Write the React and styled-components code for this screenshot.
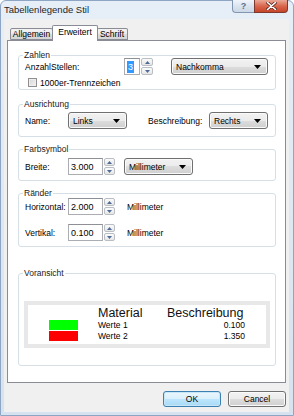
import styled, { createGlobalStyle } from "styled-components";

const Global = createGlobalStyle`
  * { box-sizing: border-box; }
  html, body { margin: 0; padding: 0; background: #fff; }
  body {
    font-family: "Liberation Sans", Arial, sans-serif;
    font-size: 8.5px;
    color: #000;
  }
`;

const Window = styled.div`
  width: 294px;
  height: 416px;
  display: flex;
  flex-direction: column;
  background: linear-gradient(#e6eef7, #d6e2ef);
  border: 1px solid #8ea6c3;
  border-radius: 6px 6px 0 0;
  padding: 0 4px 3px 3px;
`;

const TitleBar = styled.div`
  height: 18px;
  display: flex;
  align-items: flex-start;
`;

const Title = styled.div`
  padding-top: 3px;
  font-size: 9.5px;
  line-height: 11px;
  color: #1e1e1e;
`;

const CaptionButtons = styled.div`
  margin-left: auto;
  margin-right: 1px;
  margin-top: -1px;
  display: flex;
`;

const HelpButton = styled.div`
  width: 22px;
  height: 13px;
  border: 1px solid #8396b0;
  border-top: none;
  border-right: none;
  border-radius: 0 0 0 4px;
  background: linear-gradient(#f1f5fa, #dbe4ef 50%, #ccd8e6);
  color: #5b6e8b;
  font-size: 9px;
  font-weight: bold;
  display: flex;
  align-items: center;
  justify-content: center;
`;

const CloseButton = styled.div`
  width: 34px;
  height: 13px;
  border: 1px solid #7b3a2d;
  border-top: none;
  border-radius: 0 0 4px 0;
  background: linear-gradient(#eaa996, #d9674e 50%, #c6452a);
  display: flex;
  align-items: center;
  justify-content: center;
`;

const Client = styled.div`
  flex: 1;
  display: flex;
  flex-direction: column;
  background: #f0f0f0;
  padding: 6px 3px 5px 3px;
`;

const TabRow = styled.div`
  height: 15px;
  display: flex;
  align-items: flex-end;
  padding-left: 3px;
  position: relative;
  z-index: 1;
`;

const Tab = styled.div`
  width: ${(p) => p.$w}px;
  height: ${(p) => (p.$active ? 16 : 12)}px;
  margin-bottom: ${(p) => (p.$active ? -1 : 0)}px;
  margin-left: ${(p) => (p.$active ? -1 : 0)}px;
  margin-right: ${(p) => (p.$active ? -1 : 0)}px;
  border: 1px solid #898c95;
  border-bottom: ${(p) => (p.$active ? "none" : "1px solid #898c95")};
  border-left: ${(p) => (p.$first || p.$active ? "1px solid #898c95" : "none")};
  border-radius: 2px 2px 0 0;
  background: ${(p) =>
    p.$active ? "#fff" : "linear-gradient(#f3f3f3, #ebebeb 50%, #dddddd 50%, #d5d5d5)"};
  display: flex;
  align-items: center;
  justify-content: center;
  font-size: 8.5px;
  padding-bottom: ${(p) => (p.$active ? 3 : 0)}px;
  z-index: ${(p) => (p.$active ? 2 : 1)};
`;

const Panel = styled.div`
  flex: 1;
  background: #fff;
  border: 1px solid #898c95;
  padding: 14px 9px 0 10px;
  display: flex;
  flex-direction: column;
`;

const Group = styled.div`
  border: 1px solid #d5dfe5;
  border-radius: 3px;
  margin-top: ${(p) => p.$mt}px;
  padding: 0 6px ${(p) => p.$pb}px 6px;
  display: flex;
  flex-direction: column;
`;

const Caption = styled.div`
  align-self: flex-start;
  margin: -6px 0 -3px -2px;
  padding: 0 1px;
  background: #fff;
  line-height: 11px;
  font-size: 8.5px;
  color: #1a1a1a;
`;

const Row = styled.div`
  display: flex;
  align-items: center;
  height: ${(p) => p.$h}px;
  margin-top: ${(p) => p.$mt}px;
`;

const Label = styled.div`
  width: ${(p) => p.$w}px;
  margin-left: ${(p) => p.$ml || 0}px;
  flex-shrink: 0;
  font-size: 8.5px;
  white-space: nowrap;
`;

const TextBox = styled.div`
  width: ${(p) => p.$w}px;
  height: 17px;
  border: 1px solid #abadb3;
  border-top-color: #8e9096;
  background: #fff;
  padding-left: 2px;
  display: flex;
  align-items: center;
  font-size: 9px;
`;

const Selected = styled.span`
  background: #3399ff;
  color: #fff;
  padding: 0 1px;
  line-height: 12px;
`;

const SpinStack = styled.div`
  width: ${(p) => p.$w}px;
  height: 17px;
  margin-left: 1px;
  display: flex;
  flex-direction: column;
  gap: 1px;
`;

const SpinButton = styled.div`
  flex: 1;
  border: 1px solid #b9bdc4;
  border-radius: 2px;
  background: linear-gradient(#fbfbfb, #e6e6e6);
  display: flex;
  align-items: center;
  justify-content: center;
`;

const Combo = styled.div`
  width: ${(p) => p.$w}px;
  height: 17px;
  margin-left: ${(p) => p.$ml || 0}px;
  border: 1px solid #707070;
  border-radius: 3px;
  background: linear-gradient(#f2f2f2, #ebebeb 50%, #dddddd 50%, #cfcfcf);
  box-shadow: inset 0 0 0 1px #fafafa;
  display: flex;
  align-items: center;
  justify-content: space-between;
  padding: 0 6px 0 4px;
  font-size: 8.5px;
`;

const CheckBox = styled.div`
  width: 9px;
  height: 9px;
  margin-left: 3px;
  border: 1px solid #8f8f8f;
  background: linear-gradient(135deg, #d6d6d6, #f4f4f4);
  box-shadow: inset 0 0 0 1px #eeeeee;
`;

const Unit = styled.div`
  margin-left: ${(p) => p.$ml}px;
  font-size: 8.5px;
`;

const Preview = styled.div`
  margin: 25px 0 0 -1px;
  width: 246px;
  height: 47px;
  border: 4px solid #e8e8e8;
  background: #fff;
  padding-top: 2px;
  display: grid;
  grid-template-columns: 70px 69px 78px;
  grid-template-rows: 13px 11px 11px;
`;

const HeadCell = styled.div`
  font-size: 12.5px;
  line-height: 13px;
  color: #111;
`;

const Swatch = styled.div`
  margin-left: 21px;
  width: 29px;
  height: 10px;
  background: ${(p) => p.$color};
`;

const Cell = styled.div`
  font-size: 8.5px;
  line-height: 11px;
  text-align: ${(p) => (p.$right ? "right" : "left")};
`;

const ButtonRow = styled.div`
  margin-top: 8px;
  height: 16px;
  display: flex;
  justify-content: flex-end;
  gap: 7px;
`;

const Button = styled.div`
  width: 58px;
  height: 16px;
  border: 1px solid ${(p) => (p.$default ? "#3c7fb1" : "#707070")};
  border-radius: 3px;
  background: ${(p) =>
    p.$default
      ? "linear-gradient(#eaf6fd, #d9f0fc 50%, #bee6fd 50%, #a7d9f5)"
      : "linear-gradient(#f2f2f2, #ebebeb 50%, #dddddd 50%, #cfcfcf)"};
  box-shadow: inset 0 0 0 1px ${(p) => (p.$default ? "#c7e7f8" : "#fbfbfb")};
  display: flex;
  align-items: center;
  justify-content: center;
  font-size: 8.5px;
`;

const Arrow = () => (
  <svg width="7" height="4" viewBox="0 0 7 4">
    <path d="M0 0H7L3.5 4Z" fill="#000" />
  </svg>
);

const SpinArrow = ({ up }) => (
  <svg width="5" height="3" viewBox="0 0 5 3">
    <path d={up ? "M0 3H5L2.5 0Z" : "M0 0H5L2.5 3Z"} fill="#4e6b95" />
  </svg>
);

const Spin = ({ w }) => (
  <SpinStack $w={w}>
    <SpinButton>
      <SpinArrow up />
    </SpinButton>
    <SpinButton>
      <SpinArrow />
    </SpinButton>
  </SpinStack>
);

export default function App() {
  return (
    <>
      <Global />
      <Window>
        <TitleBar>
          <Title>Tabellenlegende Stil</Title>
          <CaptionButtons>
            <HelpButton>?</HelpButton>
            <CloseButton>
              <svg width="11" height="8" viewBox="0 0 11 8">
                <path
                  d="M1.5 0.5L9.5 7.5M9.5 0.5L1.5 7.5"
                  stroke="#5a2218"
                  strokeWidth="3"
                  strokeLinecap="round"
                />
                <path
                  d="M1.5 0.5L9.5 7.5M9.5 0.5L1.5 7.5"
                  stroke="#fff"
                  strokeWidth="1.6"
                  strokeLinecap="round"
                />
              </svg>
            </CloseButton>
          </CaptionButtons>
        </TitleBar>
        <Client>
          <TabRow>
            <Tab $w={43} $first>Allgemein</Tab>
            <Tab $w={46} $active>Erweitert</Tab>
            <Tab $w={31}>Schrift</Tab>
          </TabRow>
          <Panel>
            <Group $mt={0} $pb={1}>
              <Caption>Zahlen</Caption>
              <Row $h={17} $mt={0}>
                <Label $w={99}>AnzahlStellen:</Label>
                <TextBox $w={16}>
                  <Selected>3</Selected>
                </TextBox>
                <Spin w={12} />
                <Combo $w={97} $ml={18}>
                  Nachkomma
                  <Arrow />
                </Combo>
              </Row>
              <Row $h={11} $mt={2}>
                <CheckBox />
                <Label $w={120} $ml={3}>1000er-Trennzeichen</Label>
              </Row>
            </Group>

            <Group $mt={14} $pb={7}>
              <Caption>Ausrichtung</Caption>
              <Row $h={17} $mt={5}>
                <Label $w={43}>Name:</Label>
                <Combo $w={59}>
                  Links
                  <Arrow />
                </Combo>
                <Label $w={61} $ml={21}>Beschreibung:</Label>
                <Combo $w={59}>
                  Rechts
                  <Arrow />
                </Combo>
              </Row>
            </Group>

            <Group $mt={12} $pb={5}>
              <Caption>Farbsymbol</Caption>
              <Row $h={17} $mt={6}>
                <Label $w={43}>Breite:</Label>
                <TextBox $w={35}>3.000</TextBox>
                <Spin w={11} />
                <Combo $w={69} $ml={9}>
                  Millimeter
                  <Arrow />
                </Combo>
              </Row>
            </Group>

            <Group $mt={12} $pb={5}>
              <Caption>Ränder</Caption>
              <Row $h={17} $mt={2}>
                <Label $w={43}>Horizontal:</Label>
                <TextBox $w={35}>2.000</TextBox>
                <Spin w={11} />
                <Unit $ml={12}>Millimeter</Unit>
              </Row>
              <Row $h={17} $mt={9}>
                <Label $w={43}>Vertikal:</Label>
                <TextBox $w={35}>0.100</TextBox>
                <Spin w={11} />
                <Unit $ml={12}>Millimeter</Unit>
              </Row>
            </Group>

            <Group $mt={26} $pb={17}>
              <Caption>Voransicht</Caption>
              <Preview>
                <div />
                <HeadCell>Material</HeadCell>
                <HeadCell>Beschreibung</HeadCell>
                <Swatch $color="#00ff00" />
                <Cell>Werte 1</Cell>
                <Cell $right>0.100</Cell>
                <Swatch $color="#ff0000" />
                <Cell>Werte 2</Cell>
                <Cell $right>1.350</Cell>
              </Preview>
            </Group>
          </Panel>
          <ButtonRow>
            <Button $default>OK</Button>
            <Button>Cancel</Button>
          </ButtonRow>
        </Client>
      </Window>
    </>
  );
}
